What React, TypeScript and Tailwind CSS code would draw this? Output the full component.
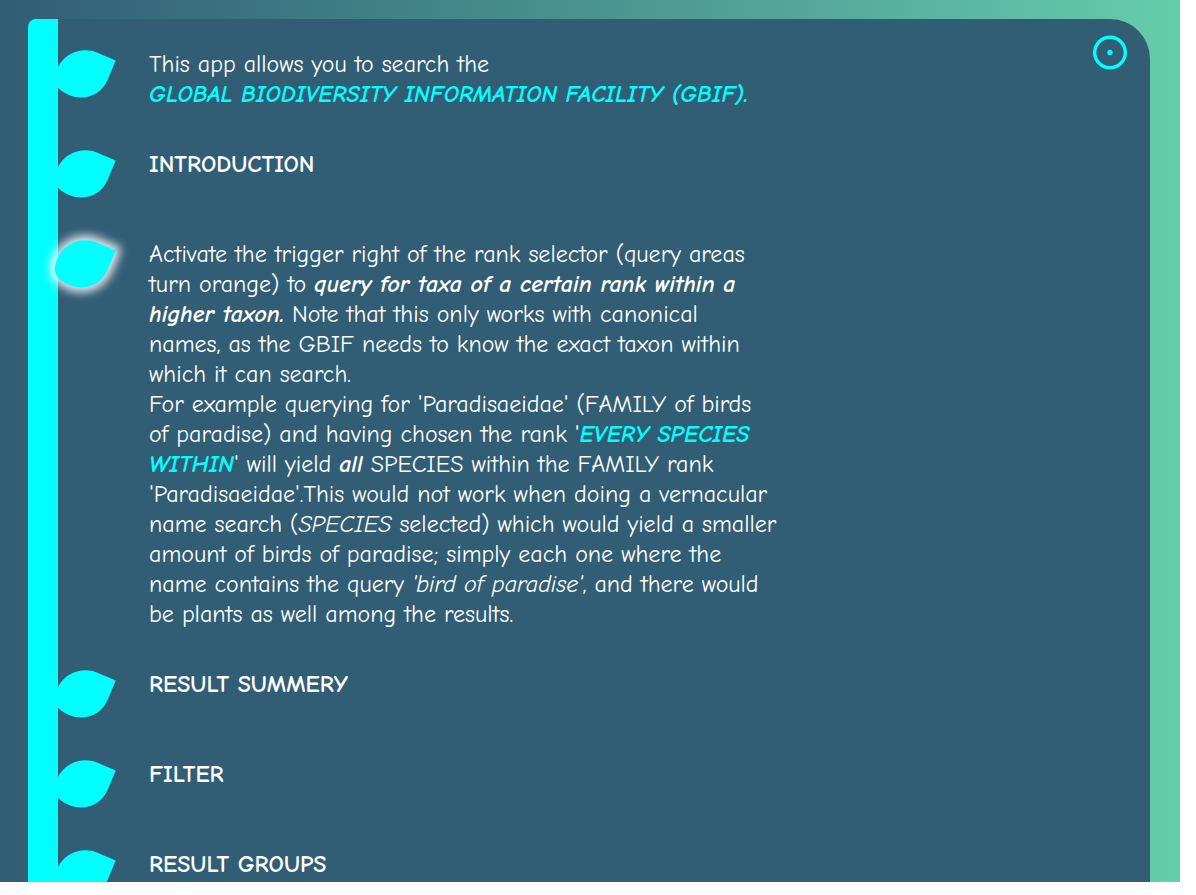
import type { ReactNode } from "react";

type Entry = { id: string; body: ReactNode; title?: boolean; active?: boolean; gap: string };

const entries: Entry[] = [
  {
    id: "about",
    gap: "pb-10",
    body: (
      <p>
        This app allows you to search the
        <br />
        <a href="https://www.gbif.org" className="font-bold italic text-[#00ffff]">
          GLOBAL BIODIVERSITY INFORMATION FACILITY (GBIF).
        </a>
      </p>
    ),
  },
  { id: "introduction", gap: "pb-[60px]", title: true, body: "INTRODUCTION" },
  {
    id: "trigger",
    gap: "pb-10",
    active: true,
    body: (
      <p>
        Activate the trigger right of the rank selector (query areas
        <br />
        turn orange) to{" "}
        <b className="italic">
          query for taxa of a certain rank within a
          <br />
          higher taxon.
        </b>{" "}
        Note that this only works with canonical
        <br />
        names, as the GBIF needs to know the exact taxon within
        <br />
        which it can search.
        <br />
        For example querying for 'Paradisaeidae' (FAMILY of birds
        <br />
        of paradise) and having chosen the rank '
        <b className="italic text-[#00ffff]">
          EVERY SPECIES
          <br />
          WITHIN
        </b>
        ' will yield <b className="italic">all</b> SPECIES within the FAMILY rank
        <br />
        'Paradisaeidae'.This would not work when doing a vernacular
        <br />
        name search (<i>SPECIES</i> selected) which would yield a smaller
        <br />
        amount of birds of paradise; simply each one where the
        <br />
        name contains the query <i>'bird of paradise'</i>, and there would
        <br />
        be plants as well among the results.
      </p>
    ),
  },
  { id: "summary", gap: "pb-[60px]", title: true, body: "RESULT SUMMERY" },
  { id: "filter", gap: "pb-[60px]", title: true, body: "FILTER" },
  { id: "groups", gap: "pb-0", title: true, body: "RESULT GROUPS" },
];

const leafShape =
  "M61.7 11.4 L43.5 3.7 C28 -2.5 11 4 4 18 C-1 29 0 36 7 41.5 C13 45.5 19 48.5 27 48.5 C39 48.5 49 42 54 30 Z";

function Leaf({ active }: { active?: boolean }) {
  return (
    <svg viewBox="0 0 62 50" aria-hidden="true" className="h-[50px] w-[62px] overflow-visible">
      {active && (
        <path
          d={leafShape}
          fill="#ffffff"
          stroke="#ffffff"
          strokeWidth="10"
          strokeLinejoin="round"
          className="opacity-85 blur-[5px]"
        />
      )}
      <path d={leafShape} fill="#00ffff" />
    </svg>
  );
}

export default function App() {
  return (
    <div className="flex h-screen flex-col overflow-hidden bg-white pr-4 pb-[13px] font-['Comic_Neue','DejaVu_Sans',sans-serif]">
      <div className="flex min-h-0 flex-1 overflow-hidden bg-linear-to-r from-[#315d75] to-[#66cdaa] pt-[19px] pr-[30px] pl-7">
        <main className="flex min-h-0 flex-1 items-start overflow-hidden rounded-tl-lg rounded-tr-[40px] bg-[#315d75]">
          <div className="w-[30px] shrink-0 self-stretch bg-[#00ffff]" />
          <ul className="-ml-1 flex min-w-0 flex-1 flex-col pt-[30px] text-2xl leading-[30px] font-normal text-white">
            {entries.map((entry) => (
              <li key={entry.id} className={`flex items-start ${entry.gap}`}>
                <div className="-mb-10 w-[95px] shrink-0">
                  <Leaf active={entry.active} />
                </div>
                {entry.title ? (
                  <h2>
                    <button type="button" className="block font-bold">
                      {entry.body}
                    </button>
                  </h2>
                ) : (
                  entry.body
                )}
              </li>
            ))}
          </ul>
          <button type="button" aria-label="Close" className="mt-4 mr-[22px] shrink-0">
            <svg viewBox="0 0 36 36" className="size-9" fill="none" aria-hidden="true">
              <circle cx="18" cy="17.5" r="15.3" stroke="#00ffff" strokeWidth="3.4" />
              <circle cx="18" cy="17.5" r="2.7" fill="#00ffff" />
            </svg>
          </button>
        </main>
      </div>
    </div>
  );
}
